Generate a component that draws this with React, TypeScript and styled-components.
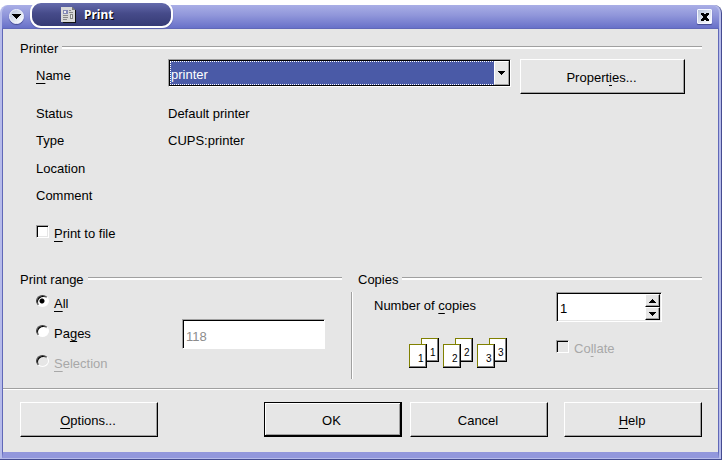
import React, { useState } from "react";
import styled, { createGlobalStyle, css } from "styled-components";

const Global = createGlobalStyle`
  * { box-sizing: border-box; }
  html, body, #root { height: 100%; }
  body {
    margin: 0;
    background: #fff;
    color: #000;
    font: 13px/16px "Liberation Sans", Arial, sans-serif;
  }
  button, input, select { font: inherit; color: inherit; margin: 0; border-radius: 0; }
`;

const sunken = css`
  border: 1px solid;
  border-color: #a0a0a0 #fff #fff #a0a0a0;
`;

const Page = styled.div`
  min-height: 100%;
  display: flex;
  padding-top: 5px;
`;

const Frame = styled.div`
  flex: 1;
  min-width: 0;
  display: flex;
  flex-direction: column;
  padding: 0 2px 1px;
  border: solid #454c91;
  border-width: 0 1px 1px 0;
  border-radius: 8px 8px 0 0;
  background: #b6bbea;
`;

const TitleBar = styled.header`
  position: relative;
  height: 24px;
  display: flex;
  align-items: center;
  justify-content: space-between;
  padding: 0 7px;
  border-radius: 8px 8px 0 0;
  border-bottom: 1px solid #6068b8;
  background: linear-gradient(#a9aee6, #9096da 45%, #6871c9);
`;

const TitleTab = styled.div`
  position: absolute;
  left: 28px;
  top: -4px;
  width: 143px;
  height: 27px;
  display: flex;
  align-items: center;
  gap: 8px;
  padding-left: 29px;
  border: 2px solid #fff;
  border-radius: 11px;
  background: linear-gradient(#656bac, #464b8a 45%, #363b75);
  box-shadow: 0 1px 1px #5b62ab;
`;

const Title = styled.h1`
  margin: 0;
  color: #fff;
  font: bold 12px/16px "Noto Sans", sans-serif;
  text-shadow: 1px 1px 0 #000;
`;

const TitleButton = styled.button<{ $round?: boolean }>`
  display: grid;
  place-items: center;
  width: 15px;
  height: 15px;
  padding: 0;
  border: 1px solid #f4f6ff;
  border-radius: ${(p) => (p.$round ? "50%" : "1px")};
  background: linear-gradient(135deg, #b5c2da, #fff);
  box-shadow: 0 1px 1px #454c91;
`;

const Body = styled.form`
  flex: 1;
  display: flex;
  flex-direction: column;
  background: #e6e6e6;
  border: solid;
  border-width: 0 1px 6px;
  border-color: #6068b8 #6068b8 #9297dc;
`;

const Main = styled.main`
  flex: 1;
  padding: 11px 16px 0 17px;
`;

const Heading = styled.h2`
  display: flex;
  gap: 4px;
  margin: 0;
  padding-top: 1px;
  font: inherit;
  &::after {
    content: "";
    flex: 1;
    height: 2px;
    margin-top: 5px;
    border-top: 1px solid #a0a0a0;
    background: #fff;
  }
`;

const PrinterGrid = styled.div`
  display: grid;
  grid-template-columns: 132px minmax(0, 1fr) 165px;
  padding: 2px 17px 0 16px;
`;

const NameLabel = styled.label`
  padding-top: 9px;
`;

const Combo = styled.div`
  ${sunken}
  display: grid;
  grid-template: 26px / minmax(0, 1fr) 16px;
  height: 28px;
  margin-right: 9px;
`;

const ComboSelect = styled.select`
  grid-area: 1 / 1 / 2 / 3;
  appearance: none;
  width: 100%;
  padding: 4px 16px 0 1px;
  border: 1px solid #000;
  outline: 1px dotted #fff;
  outline-offset: -2px;
  background: #4a5aa7;
  color: #fff;
`;

const ComboArrow = styled.span`
  grid-area: 1 / 2 / 2 / 3;
  z-index: 1;
  display: grid;
  place-items: center;
  margin: 1px 1px 1px 0;
  border: 1px solid;
  border-color: #fff #a0a0a0 #a0a0a0 #fff;
  background: #e6e6e6;
  pointer-events: none;
`;

const PushButton = styled.button<{ $default?: boolean }>`
  height: 35px;
  padding: 2px 2px 0 0;
  border: 1px solid;
  border-color: #fff #000 #000 #fff;
  background: #e6e6e6;
  box-shadow: inset -1px -1px #a0a0a0;
  ${(p) =>
    p.$default &&
    css`
      padding-top: 3px;
      border-width: 1px 2px 2px 1px;
      border-color: #000;
      box-shadow: inset 1px 1px #fff, inset -1px -1px #a0a0a0;
    `}
`;

const Details = styled.dl`
  display: grid;
  grid-template-columns: 132px minmax(0, 1fr);
  grid-template-rows: 27px 28px 27px 16px;
  margin: 0;
  padding: 12px 16px 0;
  dd { margin: 0; }
`;

const Choice = styled.label<{ $off?: boolean }>`
  display: flex;
  gap: 5px;
  color: ${(p) => (p.$off ? "#a8a8a8" : "#000")};
`;

const FileChoice = styled(Choice)`
  padding: 21px 16px 0;
  span { padding-top: 1px; }
`;

const CheckBox = styled.input`
  appearance: none;
  width: 13px;
  height: 13px;
  ${sunken}
  background: #fff;
  box-shadow: inset 1px 1px #000, inset -1px -1px #e6e6e6;
  &:checked { background: #000; }
  &:disabled { background: #e6e6e6; }
`;

const Radio = styled.input`
  appearance: none;
  width: 13px;
  height: 12px;
  border: 1px solid;
  border-radius: 50%;
  border-color: #404040 #fff #fff #404040;
  background: #fff;
  box-shadow: inset 1px 1px #000;
  &:checked { background: radial-gradient(circle at 5px 5px, #000 2px, #fff 3px); }
  &:disabled { background: #e6e6e6; }
`;

const Lower = styled.div`
  display: grid;
  grid-template-columns: minmax(0, 322fr) minmax(0, 344fr);
  column-gap: 16px;
  padding-top: 29px;
`;

const Section = styled.section`
  min-width: 0;
`;

const RangeGrid = styled.div`
  display: grid;
  grid-template-columns: 146px minmax(0, 143px);
  grid-auto-rows: 30px;
  padding: 7px 0 0 16px;
  span { padding-top: 1px; }
`;

const RangeInput = styled.input`
  ${sunken}
  width: 100%;
  height: 30px;
  margin-top: -6px;
  padding: 4px 3px 0;
  background: #fff;
  color: #8c8c8c;
  box-shadow: inset 1px 1px #000;
`;

const CopiesPane = styled.div`
  display: grid;
  grid-template-columns: 182px minmax(0, 1fr);
  grid-template-rows: 42px 45px;
  margin: 4px 0 0 -7px;
  padding-left: 22px;
  border-left: 1px solid #a0a0a0;
  box-shadow: inset 1px 0 #fff;
`;

const CopiesLabel = styled.label`
  padding-top: 6px;
`;

const Spinner = styled.div`
  ${sunken}
  display: grid;
  grid-template-columns: minmax(0, 1fr) 16px;
  width: 106px;
  height: 30px;
  background: #fff;
  box-shadow: inset 1px 1px #000, inset -1px -1px #e6e6e6;
`;

const SpinInput = styled.input`
  width: 100%;
  padding: 4px 3px 0;
  border: 0;
  background: none;
`;

const SpinButtons = styled.div`
  display: grid;
  grid-template-rows: 1fr 1fr;
  padding: 1px 1px 1px 0;
`;

const SpinButton = styled.button`
  display: grid;
  place-items: center;
  padding: 0;
  border: 1px solid;
  border-color: #fff #000 #000 #fff;
  background: #e6e6e6;
  box-shadow: inset -1px -1px #a0a0a0;
`;

const SheetArt = styled.svg`
  margin: 4px 0 0 35px;
`;

const CollateChoice = styled(Choice)`
  align-items: flex-start;
  padding-top: 6px;
  span { padding-top: 1px; }
`;

const Footer = styled.footer`
  display: flex;
  justify-content: space-between;
  padding: 13px 16px 15px 17px;
  border-top: 1px solid #a0a0a0;
  box-shadow: inset 0 1px #fff;
`;

const ButtonGroup = styled.div<{ $wide?: boolean }>`
  display: flex;
  gap: ${(p) => (p.$wide ? 16 : 8)}px;
  ${PushButton} { width: 138px; }
`;

const Key = styled.u`
  text-decoration: underline;
  text-decoration-thickness: 1px;
  text-underline-offset: 3px;
  text-decoration-skip-ink: none;
`;

const Arrow = ({ up }: { up?: boolean }) => (
  <svg width="7" height="4" viewBox="0 0 7 4" shapeRendering="crispEdges" aria-hidden="true">
    <path d={up ? "M3 0h1v1h1v1h1v1h1v1H0V3h1V2h1V1h1z" : "M0 0h7v1H6v1H5v1H4v1H3V3H2V2H1V1H0z"} />
  </svg>
);

const DocumentIcon = () => (
  <svg width="15" height="16" viewBox="0 0 15 16" shapeRendering="crispEdges" aria-hidden="true">
    <path d="M2 1h10l3 3v12H2z" fill="#111" />
    <path d="M0 0h11l3 3v12H0z" fill="#d8d8d8" />
    <path d="M11 0v3h3z" fill="#777" />
    <path d="M2 3h5v4H2z" fill="#8489b6" />
    <path d="M3 4h2v2H3z" fill="#eee" />
    <path d="M8 3h2v1H8zM8 5h4v1H8zM2 8h5v1H2zM9 7h3v5H9zM2 10h5v1H2zM2 12h4v1H2z" fill="#888" />
    <path d="M10 8h1v3h-1z" fill="#eee" />
  </svg>
);

const Sheet = ({ x, y, n }: { x: number; y: number; n: number }) => (
  <g transform={`translate(${x} ${y})`}>
    <rect width="18" height="24" fill="#000" />
    <rect width="17" height="23" fill="#808080" />
    <rect width="17" height="22" fill="#808000" />
    <rect width="1" height="23" fill="#808000" />
    <rect x="1" y="1" width="15" height="21" fill="#fff" />
    <rect x="16" y="1" width="1" height="22" fill="#808080" />
    <text x="9" y="18" fontSize="10" fontFamily="Liberation Sans, sans-serif">{n}</text>
  </g>
);

const CollateIcon = () => (
  <SheetArt width="98" height="30" viewBox="0 0 98 30" shapeRendering="crispEdges" aria-hidden="true">
    {[1, 2, 3].map((n) => (
      <React.Fragment key={n}>
        <Sheet x={(n - 1) * 34 + 12} y={0} n={n} />
        <Sheet x={(n - 1) * 34} y={6} n={n} />
      </React.Fragment>
    ))}
  </SheetArt>
);

export default function App() {
  const [copies, setCopies] = useState(1);
  const [range, setRange] = useState("all");
  const [toFile, setToFile] = useState(false);

  return (
    <>
      <Global />
      <Page>
        <Frame>
          <TitleBar>
            <TitleButton $round aria-label="Window menu">
              <svg width="9" height="5" viewBox="0 0 9 5" shapeRendering="crispEdges"><path d="M0 0h9v1H8v1H7v1H6v1H5v1H4V4H3V3H2V2H1V1H0z" /></svg>
            </TitleButton>
            <TitleTab>
              <DocumentIcon />
              <Title>Print</Title>
            </TitleTab>
            <TitleButton aria-label="Close">
              <svg width="8" height="8" viewBox="0 0 8 8" shapeRendering="crispEdges">
                <path d="M0 0h3v1h2V0h3v2H7v1H6v2h1v1h1v2H5V7H3v1H0V6h1V5h1V3H1V2H0z" />
              </svg>
            </TitleButton>
          </TitleBar>
          <Body onSubmit={(e) => e.preventDefault()}>
            <Main>
              <Heading>Printer</Heading>
              <PrinterGrid>
                <NameLabel htmlFor="name"><Key>N</Key>ame</NameLabel>
                <Combo>
                  <ComboSelect id="name"><option>printer</option></ComboSelect>
                  <ComboArrow><Arrow /></ComboArrow>
                </Combo>
                <PushButton type="button">Propert<Key>i</Key>es...</PushButton>
              </PrinterGrid>
              <Details>
                <dt>Status</dt><dd>Default printer</dd>
                <dt>Type</dt><dd>CUPS:printer</dd>
                <dt>Location</dt><dd />
                <dt>Comment</dt><dd />
              </Details>
              <FileChoice>
                <CheckBox type="checkbox" checked={toFile} onChange={(e) => setToFile(e.target.checked)} />
                <span><Key>P</Key>rint to file</span>
              </FileChoice>
              <Lower>
                <Section>
                  <Heading>Print range</Heading>
                  <RangeGrid>
                    <Choice>
                      <Radio type="radio" name="range" checked={range === "all"} onChange={() => setRange("all")} />
                      <span><Key>A</Key>ll</span>
                    </Choice>
                    <span />
                    <Choice>
                      <Radio type="radio" name="range" checked={range === "pages"} onChange={() => setRange("pages")} />
                      <span>Pa<Key>g</Key>es</span>
                    </Choice>
                    <RangeInput aria-label="Pages" defaultValue="118" disabled={range !== "pages"} />
                    <Choice $off>
                      <Radio type="radio" name="range" disabled />
                      <span><Key>S</Key>election</span>
                    </Choice>
                  </RangeGrid>
                </Section>
                <Section>
                  <Heading>Copies</Heading>
                  <CopiesPane>
                    <CopiesLabel htmlFor="copies">Number of <Key>c</Key>opies</CopiesLabel>
                    <Spinner>
                      <SpinInput id="copies" value={copies} onChange={(e) => setCopies(Number(e.target.value) || 1)} />
                      <SpinButtons>
                        <SpinButton type="button" aria-label="More copies" onClick={() => setCopies(copies + 1)}><Arrow up /></SpinButton>
                        <SpinButton type="button" aria-label="Fewer copies" onClick={() => setCopies(Math.max(1, copies - 1))}><Arrow /></SpinButton>
                      </SpinButtons>
                    </Spinner>
                    <CollateIcon />
                    <CollateChoice $off>
                      <CheckBox type="checkbox" disabled />
                      <span>Co<Key>l</Key>late</span>
                    </CollateChoice>
                  </CopiesPane>
                </Section>
              </Lower>
            </Main>
            <Footer>
              <ButtonGroup>
                <PushButton type="button"><Key>O</Key>ptions...</PushButton>
              </ButtonGroup>
              <ButtonGroup $wide>
                <ButtonGroup>
                  <PushButton type="submit" $default>OK</PushButton>
                  <PushButton type="button">Cancel</PushButton>
                </ButtonGroup>
                <PushButton type="button"><Key>H</Key>elp</PushButton>
              </ButtonGroup>
            </Footer>
          </Body>
        </Frame>
      </Page>
    </>
  );
}
